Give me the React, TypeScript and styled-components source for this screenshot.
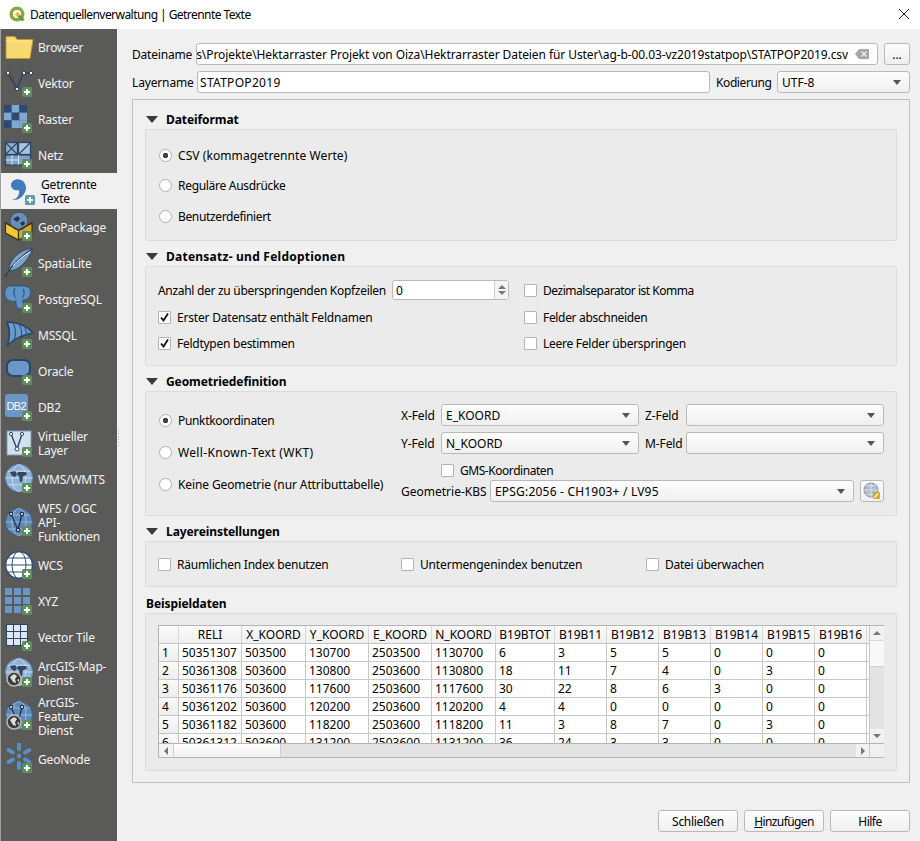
import React from "react";
import styled, { createGlobalStyle } from "styled-components";

const Global = createGlobalStyle`
  html, body { margin: 0; padding: 0; width: 920px; height: 841px; overflow: hidden; background: #f0f0f0; }
  body { font-family: "Noto Sans", "Open Sans", sans-serif; font-size: 12px; color: #000; }
  * { box-sizing: border-box; }
`;

const Window = styled.div`width: 920px; height: 841px; display: flex; flex-direction: column; background: #f0f0f0;`;
const TitleBar = styled.div`height: 29px; flex: none; background: #fff; display: flex; align-items: center; padding: 0 10px 1px 9px; gap: 5px;`;
const TitleText = styled.div`flex: 1; white-space: nowrap; letter-spacing: -0.55px;`;
const Body = styled.div`flex: 1; min-height: 0; display: flex;`;
const Sidebar = styled.div`width: 117px; flex: none; background: #5a5a59; border-left: 1px solid #a0a0a0; color: #f4f4f4; display: flex; flex-direction: column;`;
const NavItem = styled.div<{ $h?: number; $active?: boolean }>`
  height: ${p => p.$h ?? 36}px; flex: none; display: flex; align-items: center; gap: 3px;
  padding-left: ${p => (p.$active ? 5 : 2)}px;
  background: ${p => (p.$active ? "#f0f0f0" : "transparent")};
  color: ${p => (p.$active ? "#000" : "#f4f4f4")};
`;
const NavLabel = styled.div`line-height: 14px; padding-top: 2px; letter-spacing: -0.18px; white-space: nowrap;`;
const Splitter = styled.div`width: 3px; flex: none; display: flex; align-items: center;`;
const Grip = styled.div`width: 1px; height: 16px; margin-left: 1px; margin-top: 6px; background: repeating-linear-gradient(to bottom, #b5b5b5 0 1px, transparent 1px 3px);`;
const Main = styled.div`flex: 1; min-width: 0; display: flex; flex-direction: column; padding: 14px 10px 9px 12px;`;
const FormRow = styled.div`height: 22px; flex: none; display: flex; align-items: center; margin-bottom: 6px;`;
const RowLabel = styled.div<{ $w: number; $ls?: number; $ml?: number }>`
  width: ${p => p.$w}px; flex: none; white-space: nowrap; letter-spacing: ${p => p.$ls ?? 0}px; margin-left: ${p => p.$ml ?? 0}px;
`;
const Input = styled.div<{ $pl?: number }>`flex: 1; min-width: 0; height: 22px; background: #fff; border: 1px solid #b9b9b9; border-radius: 3px; display: flex; align-items: center; padding-left: ${p => p.$pl ?? 2}px; white-space: nowrap;`;
const ScrolledText = styled.div`flex: 1; min-width: 0; overflow: hidden; display: flex; justify-content: flex-end;`;
const InputText = styled.span<{ $ls: number }>`flex: none; letter-spacing: ${p => p.$ls}px;`;
const ClearSlot = styled.div`width: 29px; flex: none; display: flex; justify-content: flex-end; align-items: center; padding-right: 8px;`;
const ToolBtn = styled.div<{ $w: number; $ml?: number }>`
  width: ${p => p.$w}px; height: 22px; flex: none; margin-left: ${p => p.$ml ?? 6}px;
  background: linear-gradient(#fdfdfd, #efefef); border: 1px solid #b9b9b9; border-radius: 3px;
  display: flex; align-items: center; justify-content: center;
`;
const Combo = styled.div<{ $w?: number; $ls?: number }>`
  ${p => (p.$w ? `width:${p.$w}px;flex:none;` : "flex:1;min-width:0;")}
  letter-spacing: ${p => p.$ls ?? 0}px;
  height: 22px; background: linear-gradient(#fdfdfd, #f0f0f0); border: 1px solid #b9b9b9; border-radius: 3px;
  display: flex; align-items: center; justify-content: space-between; padding: 0 8px 0 4px; white-space: nowrap;
`;
const Caret = styled.span`width: 0; height: 0; border-left: 4px solid transparent; border-right: 4px solid transparent; border-top: 5px solid #555;`;
const Panel = styled.div`flex: none; height: 684px; border: 1px solid #c0c0c0; padding: 9px 12px 0; display: flex; flex-direction: column;`;
const GroupHeader = styled.div<{ $mt?: number; $ls?: number }>`height: 20px; flex: none; display: flex; align-items: center; gap: 8px; padding-left: 1px; margin-top: ${p => p.$mt ?? 5}px; font-weight: 700; white-space: nowrap; letter-spacing: ${p => p.$ls ?? -0.08}px;`;
const Triangle = styled.span`width: 0; height: 0; border-left: 6px solid transparent; border-right: 6px solid transparent; border-top: 7px solid #3a3a3a;`;
const Box = styled.div<{ $h: number }>`height: ${p => p.$h}px; flex: none; background: #ebebeb; border: 1px solid #dcdcdc; border-radius: 2px; padding: 0 12px;`;
const RadioStack = styled.div<{ $rh: number; $pt: number; $w?: number }>`
  display: grid; grid-auto-rows: ${p => p.$rh}px; padding-top: ${p => p.$pt}px; ${p => (p.$w ? `width:${p.$w}px;flex:none;` : "")}
`;
const Option = styled.div<{ $ls?: number }>`display: flex; align-items: center; gap: 6px; white-space: nowrap; letter-spacing: ${p => p.$ls ?? 0}px;`;
const RadioDot = styled.span<{ $on?: boolean }>`
  width: 13px; height: 13px; flex: none; border-radius: 50%; border: 1px solid #b0b0b0; background: ${p => (p.$on ? "radial-gradient(circle, #404040 0 2.5px, #fff 3px)" : "#fff")};
  margin-left: 1px;
`;
const CheckBox = styled.span`width: 13px; height: 13px; flex: none; border: 1px solid #b4b4b4; border-radius: 1px; background: #fff; display: flex; align-items: center; justify-content: center;`;
const OptionsGrid = styled.div`display: grid; grid-template-columns: 366px 1fr; grid-template-rows: 27px 26px 22px; align-items: start; padding-top: 12px;`;
const OptionCell = styled.div`height: 22px; display: flex; align-items: center;`;
const SpinRow = styled.div`height: 22px; display: flex; align-items: center; white-space: nowrap;`;
const SpinLabel = styled.span`letter-spacing: -0.3px;`;
const Spin = styled.div`width: 117px; flex: none; height: 20px; margin-left: auto; margin-right: 15px; background: #fff; border: 1px solid #b9b9b9; border-radius: 3px; display: flex; align-items: center; padding-left: 3px; justify-content: space-between;`;
const SpinArrows = styled.div`width: 14px; height: 18px; border-left: 1px solid #d0d0d0; display: flex; flex-direction: column; align-items: center; justify-content: center; gap: 2px; background: #f4f4f4;`;
const ArrowUp = styled.span`width: 0; height: 0; border-left: 4px solid transparent; border-right: 4px solid transparent; border-bottom: 4px solid #777;`;
const ArrowDown = styled.span`width: 0; height: 0; border-left: 4px solid transparent; border-right: 4px solid transparent; border-top: 4px solid #777;`;
const GeoLayout = styled.div`display: flex;`;
const GeoRight = styled.div`flex: 1; min-width: 0; padding-top: 12px;`;
const FieldGrid = styled.div`display: grid; grid-template-columns: 34px 198px 35px 198px; column-gap: 6px; row-gap: 6px; grid-auto-rows: 22px; align-items: center;`;
const FieldLabel = styled.span`white-space: nowrap; letter-spacing: -0.1px;`;
const GmsRow = styled.div`height: 20px; margin-top: 6px; padding-left: 40px; display: flex; align-items: center;`;
const KbsRow = styled.div`display: flex; align-items: center; height: 22px; margin-top: 0;`;
const TriColumns = styled.div`display: grid; grid-template-columns: 243px 245px 1fr; height: 100%; align-items: center; padding-top: 1px;`;
const TableFrame = styled.div`
  margin-top: 11px; width: 726px; height: 133px; border: 1px solid #b4b4b4; display: grid; grid-template-columns: 710px 15px; grid-template-rows: 117px 14px; background: #fff;
`;
const TableClip = styled.div`overflow: hidden; background: #fff;`;
const Grid = styled.table`table-layout: fixed; border-collapse: separate; border-spacing: 0; width: 730px; font-size: 12px;`;
const HeadCell = styled.th`height: 18px; padding: 0; font-weight: 400; text-align: center; background: linear-gradient(#fafafa, #f0f0f0); border-right: 1px solid #d8d8d8; border-bottom: 1px solid #c4c4c4; overflow: hidden; white-space: nowrap; line-height: 16px;`;
const RowHead = styled.th`height: 18px; padding: 0 0 0 3px; font-weight: 400; text-align: left; background: linear-gradient(#fafafa, #eee); border-right: 1px solid #c4c4c4; border-bottom: 1px solid #c4c4c4; line-height: 16px;`;
const Cell = styled.td`height: 18px; padding: 0 0 0 3px; border-right: 1px solid #c8c8c8; border-bottom: 1px solid #c8c8c8; white-space: nowrap; overflow: hidden; line-height: 16px;`;
const VBar = styled.div`display: grid; grid-template-rows: 14px 27px 1fr 14px; border-left: 1px solid #c8c8c8;`;
const HBar = styled.div`display: grid; grid-template-columns: 14px 108px 1fr 13px; border-top: 1px solid #b4b4b4;`;
const BarBtn = styled.div`background: #f2f2f2; display: flex; align-items: center; justify-content: center;`;
const BarHandle = styled.div`background: linear-gradient(#fff, #f0f0f0); border-left: 1px solid #cfcfcf; border-right: 1px solid #cfcfcf;`;
const VHandle = styled.div`background: #f8f8f8; border-top: 1px solid #d8d8d8; border-bottom: 1px solid #cfcfcf;`;
const BarTrough = styled.div`background: #e3e3e3;`;
const Corner = styled.div`background: #f0f0f0; border-top: 1px solid #b4b4b4; border-left: 1px solid #c8c8c8;`;
const ArrowLeft = styled.span`width: 0; height: 0; border-top: 4px solid transparent; border-bottom: 4px solid transparent; border-right: 4px solid #777;`;
const ArrowRight = styled.span`width: 0; height: 0; border-top: 4px solid transparent; border-bottom: 4px solid transparent; border-left: 4px solid #777;`;
const Footer = styled.div`flex: 1; display: flex; justify-content: flex-end; align-items: flex-end; gap: 6px;`;
const DialogButton = styled.div<{ $ls: number }>`width: 80px; height: 22px; background: linear-gradient(#fdfdfd, #f0f0f0); border: 1px solid #b9b9b9; border-radius: 3px; display: flex; align-items: center; justify-content: center; letter-spacing: ${p => p.$ls}px;`;
const Mnemonic = styled.span`text-decoration: underline;`;

const NAVY = "#2b4566";
const BLUE = "#6b96c8";

const Plus = ({ c = "#5c8f5c", x = 19, y = 20 }: { c?: string; x?: number; y?: number }) => (
  <g>
    <rect x={x} y={y} width={10} height={10} rx={1.5} fill={c} />
    <path d={`M${x + 5} ${y + 2}v6M${x + 2} ${y + 5}h6`} stroke="#fff" strokeWidth={2} />
  </g>
);
const Ic: React.FC<{ children: React.ReactNode }> = ({ children }) => (
  <svg width={32} height={32} viewBox="0 0 32 32" style={{ flex: "none" }}>{children}</svg>
);
const Globe = ({ cx = 14, cy = 14, r = 13.5, land = true }: { cx?: number; cy?: number; r?: number; land?: boolean }) => (
  <g>
    <circle cx={cx} cy={cy} r={r} fill="#8fb2d8" stroke="#5f8cbc" />
    <ellipse cx={cx} cy={cy} rx={r * 0.5} ry={r} fill="none" stroke="#dfeaf5" strokeWidth={0.7} />
    <path d={`M${cx - r} ${cy}h${2 * r}M${cx - r * 0.85} ${cy - r * 0.5}h${1.7 * r}M${cx - r * 0.85} ${cy + r * 0.5}h${1.7 * r}`} stroke="#dfeaf5" strokeWidth={0.7} />
    {land && <path d={`M${cx - 9} ${cy - 6}l5-1 2 3-2 3-3-1zM${cx - 1} ${cy - 6}l8 0 1 3-4 1-1 6-2 0-1-6-2-1z`} fill="#33475f" />}
  </g>
);
const WireGlobe = () => (
  <g>
    <circle cx={14} cy={14} r={13.5} fill="#5d8abb" stroke="#3d648e" />
    <ellipse cx={14} cy={14} rx={7} ry={13.5} fill="none" stroke="#a9c4de" strokeWidth={0.8} />
    <path d="M1 14h26M3 7h22M3 21h22" stroke="#a9c4de" strokeWidth={0.8} />
  </g>
);
const Nodes = () => (
  <g fill="#fff" stroke="#1d2c40" strokeWidth={1.2}>
    <path d="M6 6l7 16 4-16" fill="none" />
    <circle cx={6} cy={6} r={1.6} /><circle cx={17} cy={6} r={1.6} /><circle cx={13} cy={22} r={1.6} />
  </g>
);
const DarkGlobe = () => (
  <g>
    <circle cx={9} cy={21} r={7} fill="#3c3c3c" stroke="#bcbcbc" strokeWidth={1.5} />
    <path d="M5 19l4-3 3 2-2 3 1 4-3-1zM12 22l2-1 0 3z" fill="#dedede" />
  </g>
);

const LIGHT = "#7fa7d3";
const DARK = "#2d4a70";
const rasterCells = [
  [DARK, LIGHT, DARK],
  [LIGHT, DARK, LIGHT],
  [DARK, LIGHT, LIGHT],
];

const icons: Record<string, React.ReactNode> = {
  browser: <Ic><path d="M3 5.5h9l2 3h16l-3 19H3z" fill="#f7d96f" stroke="#b99a2f" /><path d="M3 10h25" stroke="#fbe89c" /></Ic>,
  vektor: <Ic><path d="M5 6l9 16 6-16h8" fill="none" stroke={NAVY} strokeWidth={1.6} /><g fill="#fff" stroke={NAVY}><circle cx={5} cy={6} r={1.7} /><circle cx={14} cy={22} r={1.7} /><circle cx={21} cy={6} r={1.7} /><circle cx={28} cy={6} r={1.7} /></g><Plus /></Ic>,
  raster: <Ic>{rasterCells.flatMap((r, y) => r.map((c, x) => <rect key={`${x}${y}`} x={1 + x * 7.67} y={2 + y * 7.67} width={7.67} height={7.67} fill={c} />))}<Plus /></Ic>,
  netz: <Ic>
    <rect x={2.5} y={3.5} width={12} height={12} fill="#8fb0d4" stroke={NAVY} strokeWidth={1.3} />
    <path d="M2.5 3.5l12 12M14.5 3.5l-12 12" stroke={NAVY} strokeWidth={1.2} />
    <rect x={15.5} y={3.5} width={12} height={12} fill="#a8c3df" stroke={NAVY} strokeWidth={1.3} />
    <path d="M15.5 15.5l12-12" stroke={NAVY} strokeWidth={1.2} />
    <rect x={2.5} y={16} width={25} height={10} fill="#7fa3cb" stroke={NAVY} strokeWidth={1.3} />
    <path d="M2.5 21h13M9 16v10M15.5 16v10" stroke="#dfe8f2" strokeWidth={0.9} />
    <Plus />
  </Ic>,
  csv: <Ic><path d="M15 5c-5-2-10 1-10 5 0 4 4 6 8 5 1 5-2 9-7 10 7 1 13-5 14-11 .5-4-2-8-5-9z" fill="#3e7cbd" /><Plus c="#5e9fa8" /></Ic>,
  gpkg: <Ic><path d="M2.5 12l13 7v10l-13-7z" fill="#f0c83a" stroke="#3a3110" strokeWidth={1.2} /><path d="M29 12l-13.5 7v10L29 22z" fill="#d9a921" stroke="#3a3110" strokeWidth={1.2} /><circle cx={16} cy={10} r={9} fill="#6a8fb5" stroke="#39526d" /><path d="M10 8l5-3 2 3-3 3zM17 12l4-2 1 3-3 2z" fill="#24364a" /><path d="M2.5 12l13 7 13.5-7" fill="none" stroke="#3a3110" strokeWidth={1.2} /><Plus /></Ic>,
  spatial: <Ic><path d="M30 1C20 2 11 8 7 17c-1 3-1 5-1 7 9 0 19-9 24-23z" fill="#7da2c8" stroke="#2d4a6b" /><path d="M6 24C11 15 20 8 29 2M6 24l-4 6" stroke="#22384f" fill="none" strokeWidth={1.1} /><path d="M10 19c5-6 10-10 17-14" stroke="#e4edf5" fill="none" /><Plus /></Ic>,
  pg: <Ic><path d="M6 3h14c6 0 9 4 7 9-1 4-5 5-7 5 0 5 0 9-3 9-4 0-4-5-4-8-4 1-8 0-10-3C1 12 1 5 6 3z" fill="#5f93c7" stroke="#2e5783" /><path d="M12 5c-2 4-1 8 1 10M20 6c2 4 1 7-1 9" fill="none" stroke="#244668" /><Plus /></Ic>,
  mssql: <Ic><path d="M4 3c10 0 20 4 26 11-7 1-19 5-26 13 3-8 3-17 0-24z" fill="#6b9bcb" stroke="#23446b" strokeWidth={1.6} /><path d="M10 4c3 5 3 12 1 18M16 6c3 4 3 8 2 13M22 9c1 3 2 5 1 7" stroke="#23446b" fill="none" /><Plus /></Ic>,
  oracle: <Ic><rect x={4} y={5} width={23} height={16} rx={6} fill={BLUE} stroke={NAVY} strokeWidth={2} /><Plus /></Ic>,
  db2: <Ic><rect x={2} y={3} width={23} height={23} rx={3} fill={BLUE} /><text x={3.5} y={19} fontFamily="'Liberation Sans', sans-serif" fontSize={11} fill="#fff" textLength={20}>DB2</text><Plus /></Ic>,
  virtual: <Ic><rect x={4} y={4} width={24} height={24} fill="#d4e0ee" stroke="#7b99bd" /><path d="M8 7l6 15 5-15" fill="none" stroke={NAVY} strokeWidth={1.4} /><g fill="#fff" stroke={NAVY}><circle cx={8} cy={7} r={1.6} /><circle cx={14} cy={22} r={2} /><circle cx={19} cy={7} r={1.6} /></g><Plus /></Ic>,
  wms: <Ic><g transform="translate(2 1)"><Globe /></g><Plus /></Ic>,
  wfs: <Ic><g transform="translate(2 2)"><WireGlobe /><Nodes /></g><Plus /></Ic>,
  wcs: <Ic><g transform="translate(2 2)"><circle cx={14} cy={14} r={13.5} fill="#fff" stroke="#2d4f78" strokeWidth={1.6} /><ellipse cx={14} cy={14} rx={7} ry={13.5} fill="none" stroke="#2d4f78" /><path d="M1 14h26M3 7h22M3 21h22" stroke="#2d4f78" /></g><Plus /></Ic>,
  xyz: <Ic><g fill={BLUE} transform="translate(2 3)">{[0, 9, 18].flatMap(x => [0, 9, 18].map(y => <rect key={`${x}${y}`} x={x} y={y} width={7} height={7} />))}</g><Plus /></Ic>,
  tile: <Ic><rect x={3} y={3} width={22} height={22} fill={NAVY} /><g fill="#dfe8f2">{[4, 11, 18].flatMap(x => [4, 11, 18].map(y => <rect key={`${x}${y}`} x={x} y={y} width={6} height={6} />))}</g><Plus /></Ic>,
  agsMap: <Ic><g transform="translate(2 1)"><Globe /></g><g transform="translate(2 1)"><DarkGlobe /></g><Plus /></Ic>,
  agsFeat: <Ic><g transform="translate(2 1)"><WireGlobe /><Nodes /></g><g transform="translate(2 1)"><DarkGlobe /></g><Plus /></Ic>,
  node: <Ic><g fill="#5a8fc5" transform="translate(16 13)"><circle r={2.2} />{[-90, -30, 30, 90, 150, 210].map(a => <rect key={a} x={5} y={-2} width={9} height={4} rx={2} transform={`rotate(${a})`} />)}</g><Plus /></Ic>,
};

const nav: { k: string; t: React.ReactNode; h?: number; active?: boolean }[] = [
  { k: "browser", t: "Browser" }, { k: "vektor", t: "Vektor" }, { k: "raster", t: "Raster" }, { k: "netz", t: "Netz" },
  { k: "csv", t: <>Getrennte<br />Texte</>, active: true }, { k: "gpkg", t: "GeoPackage" }, { k: "spatial", t: "SpatiaLite" },
  { k: "pg", t: "PostgreSQL" }, { k: "mssql", t: "MSSQL" }, { k: "oracle", t: "Oracle" }, { k: "db2", t: "DB2" },
  { k: "virtual", t: <>Virtueller<br />Layer</> }, { k: "wms", t: "WMS/WMTS" },
  { k: "wfs", t: <>WFS / OGC<br />API-<br />Funktionen</>, h: 50 }, { k: "wcs", t: "WCS" }, { k: "xyz", t: "XYZ" }, { k: "tile", t: "Vector Tile" },
  { k: "agsMap", t: <>ArcGIS-Map-<br />Dienst</> }, { k: "agsFeat", t: <>ArcGIS-<br />Feature-<br />Dienst</>, h: 50 }, { k: "node", t: "GeoNode" },
];

const cols = ["RELI", "X_KOORD", "Y_KOORD", "E_KOORD", "N_KOORD", "B19BTOT", "B19B11", "B19B12", "B19B13", "B19B14", "B19B15", "B19B16"];
const widths = [20, 63, 64, 63, 63, 64, 59, 52, 52, 52, 52, 52, 52, 22];
const rows = [
  ["50351307", "503500", "130700", "2503500", "1130700", "6", "3", "5", "5", "0", "0", "0"],
  ["50361308", "503600", "130800", "2503600", "1130800", "18", "11", "7", "4", "0", "3", "0"],
  ["50361176", "503600", "117600", "2503600", "1117600", "30", "22", "8", "6", "3", "0", "0"],
  ["50361202", "503600", "120200", "2503600", "1120200", "4", "4", "0", "0", "0", "0", "0"],
  ["50361182", "503600", "118200", "2503600", "1118200", "11", "3", "8", "7", "0", "3", "0"],
  ["50361312", "503600", "131200", "2503600", "1131200", "36", "24", "3", "3", "0", "0", "0"],
];

const Check = () => (
  <svg width={11} height={11} viewBox="0 0 11 11"><path d="M2 5.5l2.5 3L9 1.5" fill="none" stroke="#111" strokeWidth={1.8} /></svg>
);
type OptProps = { on?: boolean; ls?: number; children: React.ReactNode };
const CheckOpt = ({ on, ls, children }: OptProps) => (
  <Option $ls={ls}><CheckBox>{on && <Check />}</CheckBox>{children}</Option>
);
const RadioOpt = ({ on, ls, children }: OptProps) => (
  <Option $ls={ls}><RadioDot $on={on} />{children}</Option>
);

export default function App() {
  return (
    <Window>
      <Global />
      <TitleBar>
        <svg width={16} height={16} viewBox="0 0 16 16" style={{ flex: "none" }}>
          <circle cx={8} cy={8} r={5.8} fill="none" stroke="#84a93c" strokeWidth={3.4} />
          <path d="M8 8l6.5 6.5" stroke="#6d9532" strokeWidth={3} />
          <rect x={6.5} y={6.5} width={4} height={4} fill="#e8b93a" transform="rotate(45 8.5 8.5)" />
        </svg>
        <TitleText>Datenquellenverwaltung | Getrennte Texte</TitleText>
        <svg width={12} height={12} viewBox="0 0 12 12"><path d="M1 1l10 10M11 1L1 11" stroke="#222" strokeWidth={1} /></svg>
      </TitleBar>
      <Body>
        <Sidebar>
          {nav.map(n => (
            <NavItem key={n.k} $h={n.h} $active={n.active}>
              {icons[n.k]}
              <NavLabel>{n.t}</NavLabel>
            </NavItem>
          ))}
        </Sidebar>
        <Splitter><Grip /></Splitter>
        <Main>
          <FormRow>
            <RowLabel $w={64} $ls={-0.2}>Dateiname</RowLabel>
            <Input $pl={0}>
              <ScrolledText>
                <InputText $ls={-0.085}>s\Projekte\Hektarraster Projekt von Oiza\Hektrarraster Dateien für Uster\ag-b-00.03-vz2019statpop\STATPOP2019.csv</InputText>
              </ScrolledText>
              <ClearSlot>
                <svg width={14} height={10} viewBox="0 0 14 10"><path d="M4 0h10v10H4L0 5z" fill="#a6a6a6" /><path d="M6.5 2.5l5 5M11.5 2.5l-5 5" stroke="#eee" strokeWidth={1.3} /></svg>
              </ClearSlot>
            </Input>
            <ToolBtn $w={26}>...</ToolBtn>
          </FormRow>
          <FormRow>
            <RowLabel $w={65} $ls={-0.15}>Layername</RowLabel>
            <Input><InputText $ls={0.3}>STATPOP2019</InputText></Input>
            <RowLabel $w={61} $ml={6} $ls={-0.4}>Kodierung</RowLabel>
            <Combo $w={133}>UTF-8<Caret /></Combo>
          </FormRow>
          <Panel>
            <GroupHeader $mt={0}><Triangle />Dateiformat</GroupHeader>
            <Box $h={112}>
              <RadioStack $rh={30.5} $pt={10}>
                <RadioOpt on ls={0.08}>CSV (kommagetrennte Werte)</RadioOpt>
                <RadioOpt ls={-0.3}>Reguläre Ausdrücke</RadioOpt>
                <RadioOpt ls={-0.35}>Benutzerdefiniert</RadioOpt>
              </RadioStack>
            </Box>
            <GroupHeader $ls={0.24}><Triangle />Datensatz- und Feldoptionen</GroupHeader>
            <Box $h={100}>
              <OptionsGrid>
                <SpinRow><SpinLabel>Anzahl der zu überspringenden Kopfzeilen</SpinLabel>
                  <Spin>0<SpinArrows><ArrowUp /><ArrowDown /></SpinArrows></Spin>
                </SpinRow>
                <OptionCell><CheckOpt ls={-0.47}>Dezimalseparator ist Komma</CheckOpt></OptionCell>
                <OptionCell><CheckOpt on ls={-0.2}>Erster Datensatz enthält Feldnamen</CheckOpt></OptionCell>
                <OptionCell><CheckOpt ls={-0.33}>Felder abschneiden</CheckOpt></OptionCell>
                <OptionCell><CheckOpt on ls={-0.26}>Feldtypen bestimmen</CheckOpt></OptionCell>
                <OptionCell><CheckOpt ls={-0.26}>Leere Felder überspringen</CheckOpt></OptionCell>
              </OptionsGrid>
            </Box>
            <GroupHeader><Triangle />Geometriedefinition</GroupHeader>
            <Box $h={125}>
              <GeoLayout>
                <RadioStack $rh={32} $pt={12} $w={243}>
                  <RadioOpt on ls={-0.33}>Punktkoordinaten</RadioOpt>
                  <RadioOpt ls={0.33}>Well-Known-Text (WKT)</RadioOpt>
                  <RadioOpt ls={-0.11}>Keine Geometrie (nur Attributtabelle)</RadioOpt>
                </RadioStack>
                <GeoRight>
                  <FieldGrid>
                    <FieldLabel>X-Feld</FieldLabel><Combo>E_KOORD<Caret /></Combo>
                    <FieldLabel>Z-Feld</FieldLabel><Combo><span /><Caret /></Combo>
                    <FieldLabel>Y-Feld</FieldLabel><Combo>N_KOORD<Caret /></Combo>
                    <FieldLabel>M-Feld</FieldLabel><Combo><span /><Caret /></Combo>
                  </FieldGrid>
                  <GmsRow><CheckOpt ls={-0.45}>GMS-Koordinaten</CheckOpt></GmsRow>
                  <KbsRow>
                    <RowLabel $w={89}>Geometrie-KBS</RowLabel>
                    <Combo $ls={0.2}>EPSG:2056 - CH1903+ / LV95<Caret /></Combo>
                    <ToolBtn $w={24}>
                      <svg width={18} height={18} viewBox="0 0 18 18">
                        <circle cx={8} cy={8} r={7} fill="#a9bfd4" stroke="#8a8a8a" />
                        <path d="M1 8h14M8 1v14M3 3.5h10M3 12.5h10" stroke="#e8e8e8" strokeWidth={0.8} />
                        <rect x={10} y={10} width={7} height={7} rx={1} fill="#d9ac22" />
                        <path d="M11.5 15.5l3.5-4" stroke="#fff" strokeWidth={1.2} />
                      </svg>
                    </ToolBtn>
                  </KbsRow>
                </GeoRight>
              </GeoLayout>
            </Box>
            <GroupHeader><Triangle />Layereinstellungen</GroupHeader>
            <Box $h={46}>
              <TriColumns>
                <CheckOpt ls={-0.24}>Räumlichen Index benutzen</CheckOpt>
                <CheckOpt ls={-0.16}>Untermengenindex benutzen</CheckOpt>
                <CheckOpt ls={-0.25}>Datei überwachen</CheckOpt>
              </TriColumns>
            </Box>
            <GroupHeader $mt={6}>Beispieldaten</GroupHeader>
            <Box $h={158}>
              <TableFrame>
                <TableClip>
                  <Grid>
                    <colgroup>{widths.map((w, i) => <col key={i} style={{ width: w }} />)}</colgroup>
                    <thead>
                      <tr>
                        <HeadCell />
                        {cols.map(c => <HeadCell key={c}>{c}</HeadCell>)}
                        <HeadCell />
                      </tr>
                    </thead>
                    <tbody>
                      {rows.map((r, i) => (
                        <tr key={i}>
                          <RowHead>{i + 1}</RowHead>
                          {r.map((v, j) => <Cell key={j}>{v}</Cell>)}
                          <Cell />
                        </tr>
                      ))}
                    </tbody>
                  </Grid>
                </TableClip>
                <VBar>
                  <BarBtn><ArrowUp /></BarBtn>
                  <VHandle />
                  <BarTrough />
                  <BarBtn><ArrowDown /></BarBtn>
                </VBar>
                <HBar>
                  <BarBtn><ArrowLeft /></BarBtn>
                  <BarHandle />
                  <BarTrough />
                  <BarBtn><ArrowRight /></BarBtn>
                </HBar>
                <Corner />
              </TableFrame>
            </Box>
          </Panel>
          <Footer>
            <DialogButton $ls={-0.3}>Schließen</DialogButton>
            <DialogButton $ls={-0.6}><span><Mnemonic>H</Mnemonic>inzufügen</span></DialogButton>
            <DialogButton $ls={-0.5}>Hilfe</DialogButton>
          </Footer>
        </Main>
      </Body>
    </Window>
  );
}
